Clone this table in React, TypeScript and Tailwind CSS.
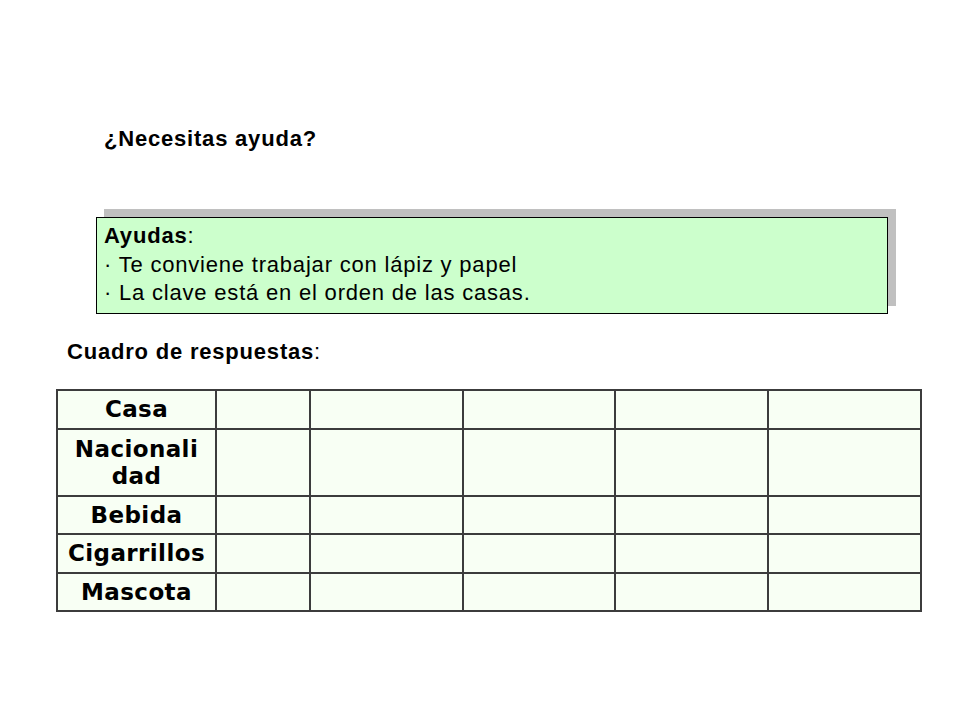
const rows: { label: string[]; h: string }[] = [
  { label: ["Casa"], h: "h-[39px]" },
  { label: ["Nacionali", "dad"], h: "h-[67px]" },
  { label: ["Bebida"], h: "h-[38px]" },
  { label: ["Cigarrillos"], h: "h-[39px]" },
  { label: ["Mascota"], h: "h-[38px]" },
];

const cols = ["w-[94px]", "w-[153px]", "w-[152px]", "w-[153px]", "w-[153px]"];

export default function App() {
  return (
    <div className="w-[960px] h-[720px] bg-white text-black font-['Liberation_Sans',Arial,sans-serif] overflow-hidden">
      {/* Pregunta */}
      <div className="pt-[127px] pl-[104px] text-[22px] leading-[24px] font-bold tracking-[0.8px]">
        ¿Necesitas ayuda?
      </div>

      {/* Caja de ayudas con sombra */}
      <div className="mt-[66px] ml-[96px] w-[792px] h-[97px] border border-black bg-[#ccffcc] shadow-[8px_-8px_0_#c0c0c0] pl-[7px] pt-[4px] text-[22px] leading-[28.5px] tracking-[0.8px]">
        <div>
          <span className="font-bold">Ayudas</span>:
        </div>
        <div>· Te conviene trabajar con lápiz y papel</div>
        <div>· La clave está en el orden de las casas.</div>
      </div>

      <div className="mt-[26px] ml-[67px] text-[22px] leading-[24px] tracking-[0.8px]">
        <span className="font-bold">Cuadro de respuestas</span>:
      </div>

      {/* Cuadro de respuestas */}
      <table className="mt-[25px] ml-[56px] border-collapse table-fixed bg-[#f8fff4]">
        <tbody>
          {rows.map(r => (
            <tr key={r.label.join("")} className={r.h}>
              <td className="w-[159px] border-2 border-[#3c3c3c] text-center align-middle p-0 font-['DejaVu_Sans',Verdana,sans-serif] font-bold text-[23px] leading-[27px] tracking-[0.4px]">
                {r.label.map(l => (
                  <div key={l}>{l}</div>
                ))}
              </td>
              {cols.map((c, i) => (
                <td key={i} className={`${c} border-2 border-[#3c3c3c] p-0`} />
              ))}
            </tr>
          ))}
        </tbody>
      </table>
    </div>
  );
}
